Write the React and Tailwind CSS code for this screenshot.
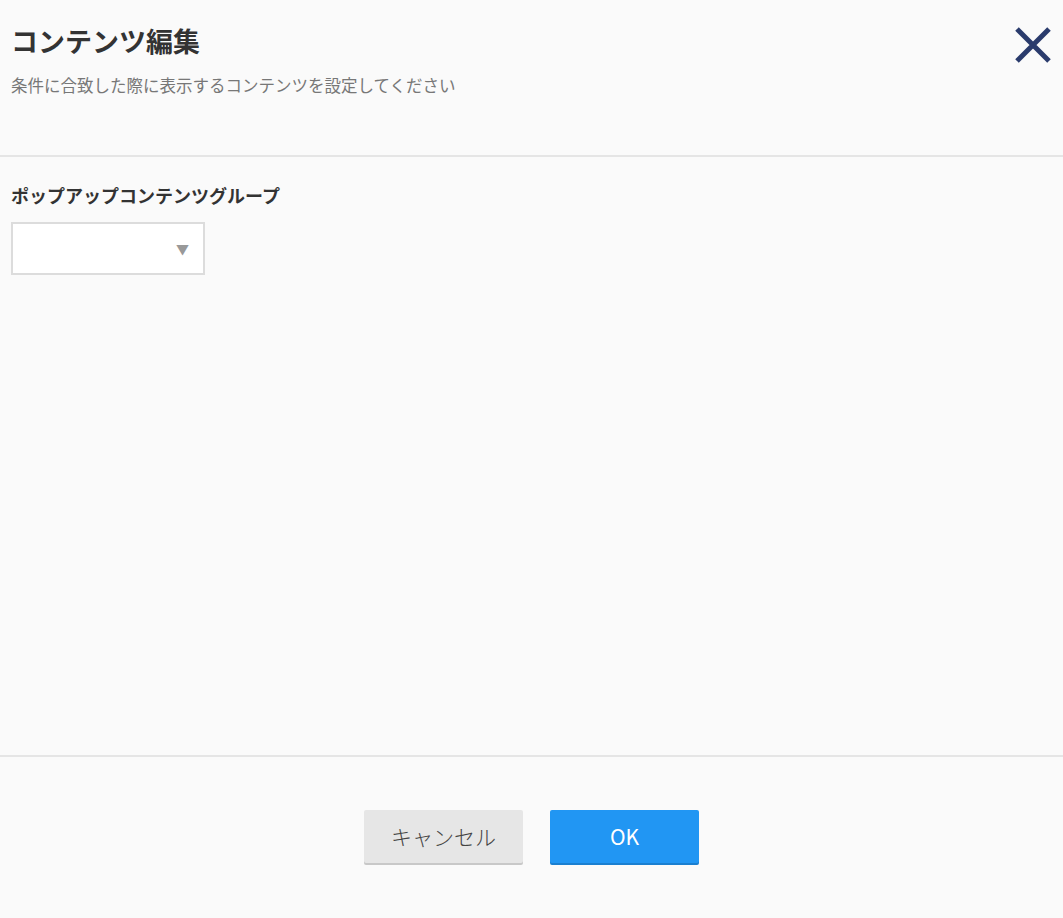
import React from "react";

const font = { fontFamily: '"Noto Sans CJK JP", "Noto Sans", sans-serif' };

const CloseIcon = () => (
  <svg width="40" height="40" viewBox="0 0 40 40">
    <path d="M4 4 L36 36 M36 4 L4 36" stroke="#2a3b6c" strokeWidth="5" />
  </svg>
);

export default function App() {
  return (
    <div
      className="min-h-[918px] w-full bg-[#fafafa] flex flex-col text-[#333]"
      style={font}
    >
      <div className="relative h-[155px] px-[11px] pt-[23px]">
        <h1 className="text-[27px] font-bold leading-[36px] text-[#333]">
          コンテンツ編集
        </h1>
        <p className="mt-[14px] text-[16.5px] leading-[24px] text-[#777]">
          条件に合致した際に表示するコンテンツを設定してください
        </p>
        <button className="absolute right-[10px] top-[25px]">
          <CloseIcon />
        </button>
      </div>
      <div className="h-[2px] bg-[#e5e5e5]" />

      <div className="h-[598px] px-[11px] pt-[25px]">
        <div className="text-[18px] font-bold leading-[26px] text-[#333]">
          ポップアップコンテンツグループ
        </div>
        <div className="mt-[14px] flex h-[53px] w-[194px] items-center justify-end border-2 border-[#dcdcdc] bg-white pr-[14px]">
          <span className="text-[13px] text-[#999]">▼</span>
        </div>
      </div>
      <div className="h-[2px] bg-[#e5e5e5]" />

      <div className="flex justify-center gap-[27px] pt-[53px] pb-[55px]">
        <button className="h-[53px] w-[159px] rounded-[2px] bg-[#e6e6e6] text-[21px] font-light text-[#444] shadow-[0_2px_0_#c8c8c8]">
          キャンセル
        </button>
        <button className="h-[53px] w-[149px] rounded-[2px] bg-[#2196f3] text-[21px] text-white shadow-[0_2px_0_#1a7fd0]">
          OK
        </button>
      </div>
    </div>
  );
}
